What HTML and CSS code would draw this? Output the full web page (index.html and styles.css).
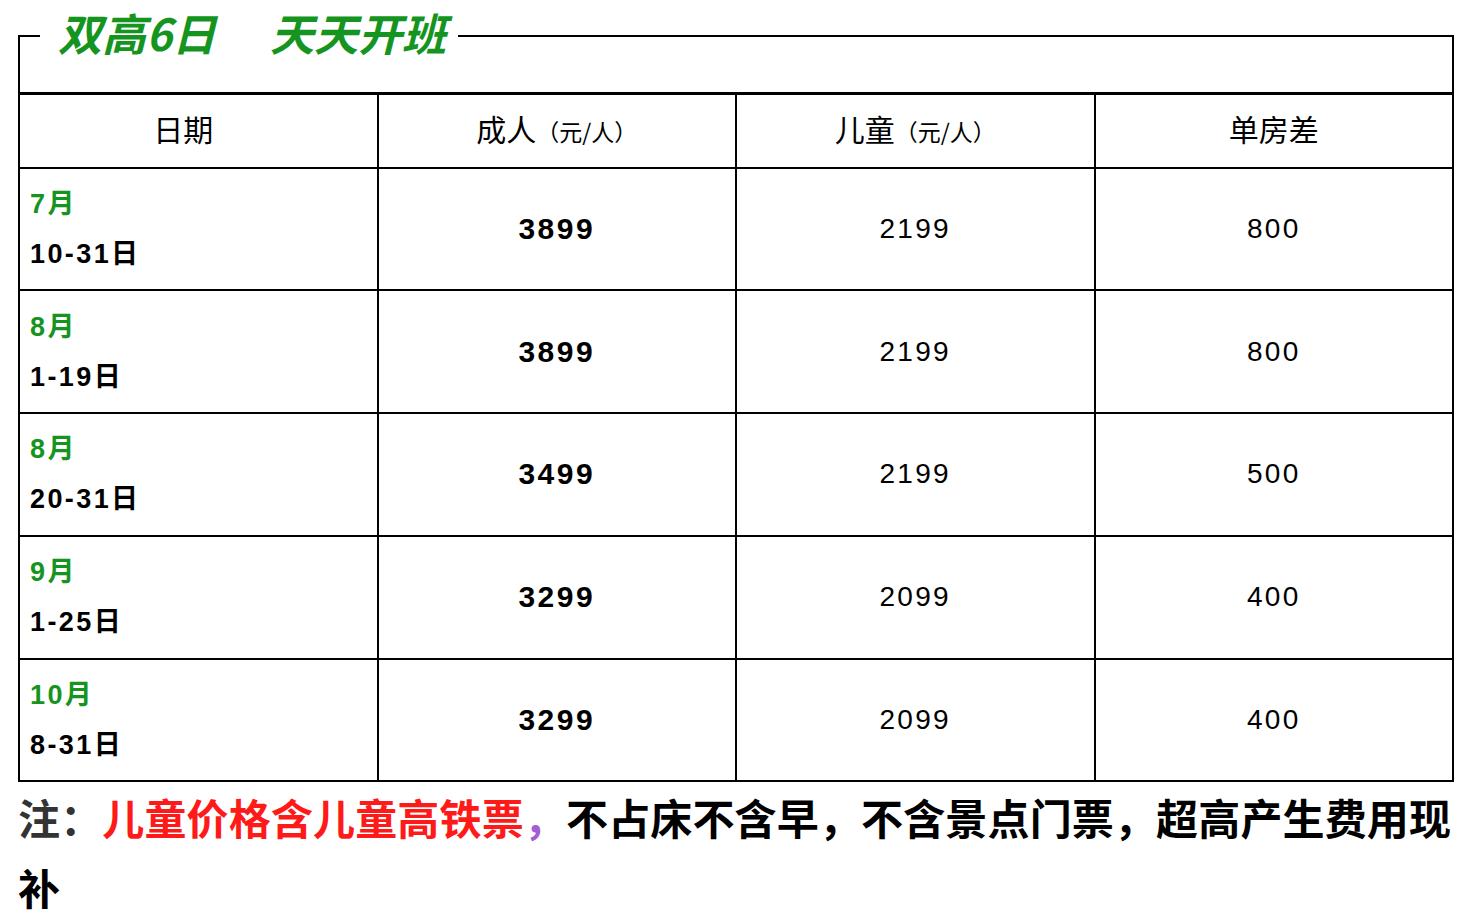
FILE: index.html
```html
<!DOCTYPE html>
<html lang="zh-CN">
<head>
<meta charset="utf-8">
<title>双高6日 天天开班</title>
<link rel="stylesheet" href="styles.css">
</head>
<body>
<div class="sheet">
  <fieldset class="frame">
    <legend class="title">双高6日<span class="title-gap"></span>天天开班</legend>
    <div class="frame-space"></div>
  </fieldset>
  <table class="prices">
    <colgroup>
      <col class="col">
      <col class="col">
      <col class="col">
      <col class="col">
    </colgroup>
    <thead>
      <tr>
        <th><span class="h-date">日期</span></th>
        <th>成人<small>（元/人）</small></th>
        <th>儿童<small>（元/人）</small></th>
        <th>单房差</th>
      </tr>
    </thead>
    <tbody>
      <tr>
        <td class="date"><span class="month">7月</span><span class="days">10-31日</span></td>
        <td class="adult">3899</td>
        <td class="num">2199</td>
        <td class="num">800</td>
      </tr>
      <tr>
        <td class="date"><span class="month">8月</span><span class="days">1-19日</span></td>
        <td class="adult">3899</td>
        <td class="num">2199</td>
        <td class="num">800</td>
      </tr>
      <tr>
        <td class="date"><span class="month">8月</span><span class="days">20-31日</span></td>
        <td class="adult">3499</td>
        <td class="num">2199</td>
        <td class="num">500</td>
      </tr>
      <tr>
        <td class="date"><span class="month">9月</span><span class="days">1-25日</span></td>
        <td class="adult">3299</td>
        <td class="num">2099</td>
        <td class="num">400</td>
      </tr>
      <tr>
        <td class="date"><span class="month">10月</span><span class="days">8-31日</span></td>
        <td class="adult">3299</td>
        <td class="num">2099</td>
        <td class="num">400</td>
      </tr>
    </tbody>
  </table>
  <p class="note"><span class="note-label">注：</span><span class="note-red">儿童价格含儿童高铁票</span><span class="note-comma">，</span><span class="note-rest">不占床不含早，不含景点门票，超高产生费用现补</span></p>
</div>
</body>
</html>
```
FILE: styles.css
```css
html, body {
  margin: 0;
  padding: 0;
  background: #ffffff;
}

body {
  font-family: "Noto Sans CJK SC", "Liberation Sans", sans-serif;
  color: #000;
  text-spacing-trim: space-all;
}

.sheet {
  width: 1436px;
  margin-left: 18px;
}

.frame {
  margin: 10px 0 0 0;
  padding: 0;
  border: 2px solid #000;
  border-bottom: none;
  min-width: 0;
}

.title {
  margin-left: 20px;
  padding: 0 12px 8px 18px;
  font-size: 44px;
  line-height: 44px;
  font-weight: 700;
  font-style: italic;
  color: #15951f;
}

.title-gap {
  display: inline-block;
  width: 54px;
}

.frame-space {
  height: 30px;
}

.prices {
  width: 1436px;
  border-collapse: collapse;
  table-layout: fixed;
  border: 2px solid #000;
  border-top: 3px solid #000;
}

.prices .col {
  width: 25%;
}

.prices th,
.prices td {
  border: 2px solid #000;
  padding: 0;
}

.prices thead tr {
  border-top: 3px solid #000;
}

.prices th {
  height: 74px;
  padding-bottom: 6px;
  box-sizing: border-box;
  font-size: 30px;
  font-weight: 400;
  text-align: center;
  vertical-align: middle;
}

.prices th .h-date {
  margin-right: 30px;
}

.prices th small {
  font-size: 23px;
}

.prices td {
  height: 120.8px;
  text-align: center;
  vertical-align: middle;
}

.prices td.date {
  text-align: left;
  padding-left: 10px;
  font-family: "Liberation Sans", "Noto Sans CJK SC", sans-serif;
  font-weight: 700;
  font-size: 27px;
  line-height: 50px;
  letter-spacing: 2.4px;
}

.month,
.days {
  display: block;
}

.month {
  color: #15951f;
}

.adult,
.num {
  font-family: "Liberation Sans", sans-serif;
}

.num {
  font-size: 28px;
  letter-spacing: 2.3px;
}

.adult {
  font-size: 30px;
  font-weight: 700;
  letter-spacing: 2.5px;
}

.note {
  margin: 0;
  font-size: 42px;
  line-height: 70px;
  font-weight: 700;
  letter-spacing: 0.15px;
  color: #000;
}

.note-label {
  color: #333333;
}

.note-red {
  color: #ff1a1a;
}

.note-comma {
  color: #a45ed0;
}

.note-rest {
  color: #000;
}
```
